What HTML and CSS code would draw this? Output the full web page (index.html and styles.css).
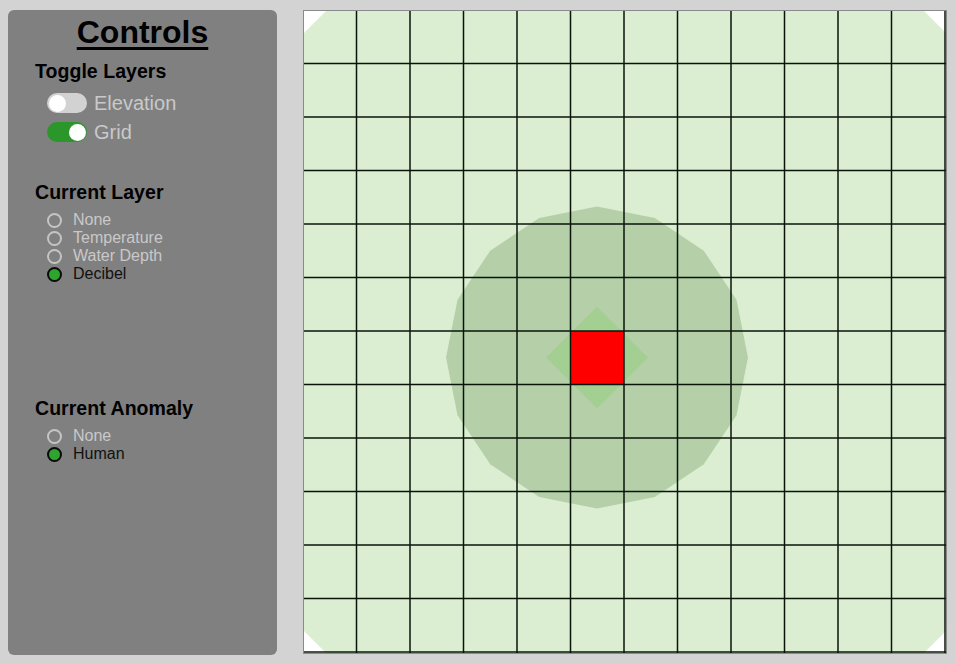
FILE: index.html
```html
<!DOCTYPE html>
<html>
<head>
<meta charset="utf-8">
<link rel="stylesheet" href="styles.css">
</head>
<body>
<div class="app">
  <aside class="panel">
    <h1 class="title">Controls</h1>
    <section class="section">
      <h2 class="heading">Toggle Layers</h2>
      <div class="toggles">
        <div class="toggle-row">
          <span class="switch"><span class="knob"></span></span>
          <span class="toggle-label">Elevation</span>
        </div>
        <div class="toggle-row">
          <span class="switch on"><span class="knob"></span></span>
          <span class="toggle-label">Grid</span>
        </div>
      </div>
    </section>
    <section class="section layer-section">
      <h2 class="heading">Current Layer</h2>
      <div class="radios">
        <div class="radio-row"><span class="radio"></span><span class="radio-label">None</span></div>
        <div class="radio-row"><span class="radio"></span><span class="radio-label">Temperature</span></div>
        <div class="radio-row"><span class="radio"></span><span class="radio-label">Water Depth</span></div>
        <div class="radio-row checked"><span class="radio"></span><span class="radio-label">Decibel</span></div>
      </div>
    </section>
    <section class="section">
      <h2 class="heading">Current Anomaly</h2>
      <div class="radios">
        <div class="radio-row"><span class="radio"></span><span class="radio-label">None</span></div>
        <div class="radio-row checked"><span class="radio"></span><span class="radio-label">Human</span></div>
      </div>
    </section>
  </aside>
  <svg class="map" width="644" height="644" viewBox="0 0 644 644">
    <rect x="0" y="0" width="644" height="644" fill="#ffffff"/>
    <polygon points="24,0 620,0 644,24 644,620 620,644 24,644 0,620 0,24" fill="#dbeed2"/>
    <polygon fill="#b5d0a8" points="445,347.5 433.5,289.7 400.8,240.7 351.8,208 294,196.5 236.2,208 187.2,240.7 154.5,289.7 143,347.5 154.5,405.3 187.2,454.3 236.2,487 294,498.5 351.8,487 400.8,454.3 433.5,405.3"/>
    <polygon fill="#a3cf93" points="294,296.5 345,347.5 294,398.5 243,347.5"/>
    <rect x="267.5" y="321" width="53.5" height="53.5" fill="#ff0000"/>
    <g stroke="#0a140a" stroke-width="1.5">
      <line x1="53.5" y1="0" x2="53.5" y2="643"/>
      <line x1="107" y1="0" x2="107" y2="643"/>
      <line x1="160.5" y1="0" x2="160.5" y2="643"/>
      <line x1="214" y1="0" x2="214" y2="643"/>
      <line x1="267.5" y1="0" x2="267.5" y2="643"/>
      <line x1="321" y1="0" x2="321" y2="643"/>
      <line x1="374.5" y1="0" x2="374.5" y2="643"/>
      <line x1="428" y1="0" x2="428" y2="643"/>
      <line x1="481.5" y1="0" x2="481.5" y2="643"/>
      <line x1="535" y1="0" x2="535" y2="643"/>
      <line x1="588.5" y1="0" x2="588.5" y2="643"/>
      <line x1="642" y1="0" x2="642" y2="643"/>
      <line y1="53.5" x1="0" y2="53.5" x2="643"/>
      <line y1="107" x1="0" y2="107" x2="643"/>
      <line y1="160.5" x1="0" y2="160.5" x2="643"/>
      <line y1="214" x1="0" y2="214" x2="643"/>
      <line y1="267.5" x1="0" y2="267.5" x2="643"/>
      <line y1="321" x1="0" y2="321" x2="643"/>
      <line y1="374.5" x1="0" y2="374.5" x2="643"/>
      <line y1="428" x1="0" y2="428" x2="643"/>
      <line y1="481.5" x1="0" y2="481.5" x2="643"/>
      <line y1="535" x1="0" y2="535" x2="643"/>
      <line y1="588.5" x1="0" y2="588.5" x2="643"/>
      <line y1="642" x1="0" y2="642" x2="643"/>
    </g>
    <rect x="0.5" y="0.5" width="643" height="643" fill="none" stroke="#8a8a8a" stroke-width="1"/>
  </svg>
</div>
</body>
</html>
```
FILE: styles.css
```css
html, body {
  margin: 0;
  padding: 0;
  background: #d3d3d3;
  font-family: "Liberation Sans", Arial, sans-serif;
}

.app {
  display: flex;
  align-items: flex-start;
  gap: 26px;
  padding: 10px 0 0 8px;
}

.panel {
  width: 269px;
  height: 645px;
  box-sizing: border-box;
  background: #808080;
  border-radius: 6px;
  padding-top: 4px;
  display: flex;
  flex-direction: column;
}

.title {
  margin: 0;
  font-size: 32px;
  font-weight: bold;
  text-align: center;
  text-decoration: underline;
  text-decoration-thickness: 3px;
  text-underline-offset: 4px;
  color: #000;
  line-height: 37px;
}

.section {
  padding-left: 27px;
}

.heading {
  margin: 10px 0 0 0;
  font-size: 19.5px;
  letter-spacing: 0.05px;
  font-weight: bold;
  color: #000;
  line-height: 21px;
}

.toggles {
  margin-top: 11px;
  padding-left: 12px;
  display: flex;
  flex-direction: column;
  gap: 9px;
}

.toggle-row {
  display: flex;
  align-items: center;
  height: 20px;
}

.switch {
  position: relative;
  width: 40px;
  height: 20px;
  border-radius: 10px;
  background: #d2d2d2;
  flex: none;
}

.switch .knob {
  position: absolute;
  top: 1.5px;
  left: 1.5px;
  width: 17px;
  height: 17px;
  border-radius: 50%;
  background: #ffffff;
}

.switch.on {
  background: #2b972b;
}

.switch.on .knob {
  left: 21.5px;
}

.toggle-label {
  margin-left: 7px;
  font-size: 20px;
  color: #c9c9c9;
  line-height: 20px;
}

.layer-section .heading {
  margin-top: 40px;
}

.layer-section {
  height: 246px;
}

.radios {
  margin-top: 8px;
  padding-left: 12px;
  display: flex;
  flex-direction: column;
}

.radio-row {
  display: flex;
  align-items: center;
  height: 18px;
}

.radio {
  width: 15px;
  height: 15px;
  box-sizing: border-box;
  border-radius: 50%;
  border: 2.5px solid #c4c4c4;
  flex: none;
}

.radio-label {
  margin-left: 11px;
  font-size: 16px;
  line-height: 18px;
  color: #c9c9c9;
}

.radio-row.checked .radio {
  border-color: #0a0a0a;
  background: #2ca62c;
}

.radio-row.checked .radio-label {
  color: #111;
}

.map {
  display: block;
  flex: none;
}
```
